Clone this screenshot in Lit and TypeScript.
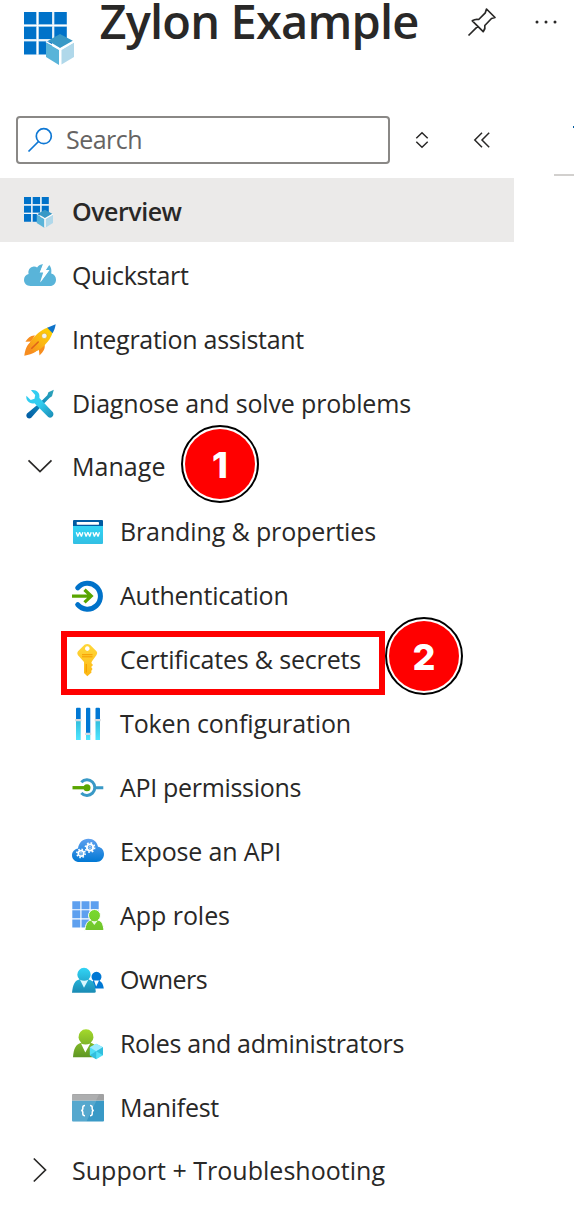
import { LitElement, html, svg, css, TemplateResult } from "lit";
import { customElement, property } from "lit/decorators.js";
import { styleMap } from "lit/directives/style-map.js";

const appGrid = svg`
  <path fill="#0072c9" d="M0 0h12.400v12.400H0zM14.600 0h13.400v12.400H14.600zM30.200 0h12.600v12.400H30.200zM0 14.600h12.400v12.400H0zM14.600 14.600h13.400v12.400H14.600zM30.200 14.600h12.600v12.400H30.200zM0 29.200h12.400v13.400H0zM14.600 29.200h13.400v13.400H14.600z"/>
  <path fill="#b5d7ee" d="M12.400 0h2.200v42.600h-2.200zM28 0h2.200v28H28zM0 12.400h42.800v2.200H0zM0 27h28v2.200H0z"/>
  <path fill="#fff" d="M13 0h1.100v42.600H13zM28.600 0h1.100v28h-1.100zM0 13h42.800v1.100H0zM0 27.600h28v1.100H0z"/>
  <path fill="#3999c6" d="M36 22l12.800 6.800L36 36 24 28.800z"/>
  <path fill="#59b4d9" d="M22 30.500L35 38v15L22 45z"/>
  <path fill="#b0d8ea" d="M50 30.500V45L37.500 52.500V38z"/>
  <path stroke="#fff" stroke-width="1.500" fill="none" d="M22 29.700L36.200 37.500 50 29.700M36.200 37.500V52"/>`;

const icons: Record<string, TemplateResult> = {
  overview: html`<svg viewBox="0 -5.200 55.200 55.200">${appGrid}</svg>`,
  quickstart: html`<svg viewBox="0 0 32 32">
    <path fill="#59b4d9" d="M6.500 28C2.600 28 0 25.200 0 22c0-3.100 2-5.400 4.600-6C3.700 12 6 9.300 9 8.700c1.500-.3 3 0 4.100.8C14.700 7.200 17 6.200 19.200 6.300L16.300 14h4.200L16.500 24.200 25.500 12h-3.600l3.300-5c2 2 2.600 5 2 8.500 3 .7 4.800 3 4.800 6.200 0 3.600-2.500 6.300-6 6.300z"/>
    <path fill="#fff" d="M19 6.200h6l-3.800 6H25L16 24.500l3.200-10h-3.500z"/></svg>`,
  rocket: html`<svg viewBox="0 -2 32 32">
    <defs><linearGradient id="o" x1="1" y1="0" x2="0" y2="1"><stop offset="0" stop-color="#ffd400"/><stop offset=".55" stop-color="#fbb713"/><stop offset="1" stop-color="#f78d1e"/></linearGradient></defs>
    <path fill="#f78d1e" d="M11 11.500C7 11 4 13.500 1.400 17.800L7 17.400zM20.500 20.500c1 4-1 7-5 11L14.800 25z"/>
    <path fill="#f78d1e" d="M7 18C2.500 20.500 1.300 26 .3 31.700 6 30.500 11 29.500 14.500 25z"/>
    <path fill="url(#o)" d="M24 3.500l4.700 4.700C27 14 22.500 21 14 26.500L9 28 5.500 23.500 6 18C11 11 17 6 24 3.500z"/>
    <path fill="#0f73c9" d="M31.700.3L23.200 3.800 28.600 9.300C30.200 6.500 31.200 3.500 31.700.3z"/>
    <circle cx="20.300" cy="11.900" r="2.700" fill="#f2f2f2" stroke="#d9a000" stroke-width=".5"/>
    <path stroke="#e0631a" stroke-width="1.600" stroke-linecap="round" d="M7.800 24.300L14.200 18"/></svg>`,
  tools: html`<svg viewBox="0 -2 32 32">
    <defs><linearGradient id="b" x1="1" y1="0" x2="0" y2="1"><stop stop-color="#32a5b8"/><stop offset=".4" stop-color="#1490bd"/><stop offset="1" stop-color="#0059a3"/></linearGradient>
    <linearGradient id="c" x1="0" y1="0" x2="1" y2="1"><stop offset=".5" stop-color="#32cdf0"/><stop offset="1" stop-color="#198ab3"/></linearGradient></defs>
    <path fill="url(#b)" d="M29.800 1.800l-5.400 2.500-1.100 3L15 15.600 3 25.600c-2 3 1 6 4 4.300L17.500 18l8.200-8.300 2.300-1.500z"/>
    <path fill="url(#c)" d="M7 2.300c5-1 9.300 2.200 8.400 7.700l13.500 14.300c1.800 3.300-1.500 6.700-4.700 4.800L10.500 15.200C5.500 16.300 1.500 12.500 2.400 7.800L6.700 12l3.800-1.200.7-3.700z"/></svg>`,
  www: html`<svg viewBox="0 -1 32 32">
    <defs><linearGradient id="w" x1="0" y1="0" x2="0" y2="1"><stop stop-color="#32d4f5"/><stop offset="1" stop-color="#32bfe3"/></linearGradient></defs>
    <path fill="url(#w)" d="M1 11h30v17q0 1-1 1H2q-1 0-1-1z"/>
    <path fill="#005ba1" d="M2 5h28q1 0 1 1v5H1V6q0-1 1-1z"/><rect x="4.700" y="7" width="22.300" height="2.700" rx=".4" fill="#fff"/>
    <path fill="none" stroke="#fff" stroke-width="1.300" stroke-linejoin="bevel" d="M4.300 17.200l1.500 4.300 1.800-4.300 1.800 4.300 1.500-4.300M12.600 17.200l1.500 4.300 1.800-4.300 1.800 4.300 1.500-4.300M20.900 17.200l1.500 4.300 1.800-4.300 1.800 4.300 1.500-4.300"/></svg>`,
  auth: html`<svg viewBox="0 -1.300 32 32">
    <path fill="none" stroke="#0072c9" stroke-width="5" stroke-linecap="round" d="M5.700 8.600A12.900 12.900 0 1 1 5.700 25.300"/>
    <path fill="none" stroke="#fff" stroke-width="6" d="M0 17h19"/>
    <path fill="none" stroke="#59a500" stroke-width="3.300" d="M0 16.800h18M12.500 10.500l6.700 6.300-6.700 6.300"/></svg>`,
  key: html`<svg viewBox="0 -2 32 32">
    <defs><linearGradient id="k" x1="0" y1="0" x2="0" y2="1"><stop stop-color="#ffd83b"/><stop offset="1" stop-color="#fcb714"/></linearGradient></defs>
    <path fill="url(#k)" fill-rule="evenodd" d="M12.500.7Q15.300-.9 18 .7L24.500 7.300Q26 9 24.500 11L20 17.200 19.300 19 21 21 19.200 23 20.500 25 19.200 27 19.500 28.500 15.300 32.200 12 29V18L5.800 11Q4.600 9 6 7.300zM15.300 2.300a2.300 2.300 0 1 0 .01 0z"/>
    <path stroke="#f59b00" stroke-width="1" d="M10 10.700h10.500M10 12.800h10.500"/><path stroke="#f5a200" stroke-width="1.300" d="M14.300 20v8.500"/></svg>`,
  token: html`<svg viewBox="0 -2 32 32">
    <defs><linearGradient id="t" x1="0" y1="0" x2="0" y2="1"><stop stop-color="#32bedd"/><stop offset="1" stop-color="#50e6ff"/></linearGradient></defs>
    <g fill="#0078d4"><rect x="4" y="-.3" width="4.700" height="13" rx="1"/><rect x="14" y="-.3" width="4.300" height="27" rx="1"/><rect x="23.500" y="-.3" width="4.500" height="13" rx="1"/></g>
    <g fill="url(#t)"><path d="M4 13h4.700v19H4zM23.500 13H28v19h-4.500zM14 27h4.300v5H14z"/></g>
    <path fill="#d5d9de" d="M3.200 11h6.200v2.300H3.200zM22.700 11h6v2.300h-6zM13.200 24.700h6v2.300h-6z"/></svg>`,
  api: html`<svg viewBox="0 -1.800 32 32">
    <path fill="none" stroke="#3999c6" stroke-width="3" d="M9.300 10.500a7.800 7.800 0 1 1 0 10.600M23 15.900h8.300"/>
    <path stroke="#59a500" stroke-width="3.300" d="M.5 15.900H15"/><circle cx="15" cy="15.900" r="3.500" fill="#59a500"/></svg>`,
  cloud: html`<svg viewBox="0 0 32 32">
    <defs><linearGradient id="d" x1="0" y1="0" x2="0" y2="1"><stop stop-color="#5ea0ef"/><stop offset="1" stop-color="#0078d4"/></linearGradient></defs>
    <path fill="url(#d)" d="M7.500 28C3 28 0 25 0 21.200c0-3.500 2.600-6.200 6-6.700C6.800 8.500 11 4.800 16.300 4.800c5.200 0 8.800 3.200 9.700 8 3.800.6 6 3.700 6 7.200 0 4.500-3.300 8-7.700 8z"/>
    <g fill="none" stroke="#fff"><circle cx="9" cy="19.400" r="2.700" stroke-width="1.700"/><circle cx="9" cy="19.400" r="4.100" stroke-width="1.700" stroke-dasharray="1.500 1.720"/><circle cx="9" cy="19.400" r="1" stroke-width=".6"/>
    <circle cx="18" cy="13.500" r="3.100" stroke-width="1.900"/><circle cx="18" cy="13.500" r="4.600" stroke-width="1.700" stroke-dasharray="1.700 1.910"/><circle cx="18" cy="13.500" r="1.100" stroke-width=".6"/></g></svg>`,
  roles: html`<svg viewBox="0 -2 32 32">
    <defs><linearGradient id="r" x1="0" y1="0" x2="0" y2="1"><stop stop-color="#79da30"/><stop offset="1" stop-color="#70c42b"/></linearGradient></defs>
    <path fill="#5ea0ef" d="M.3 1.300h8v8h-8zM9.500 1.300h8v8h-8zM18.700 1.300h8v8h-8zM.3 10.300h8v8h-8zM9.500 10.300h8v8h-8zM18.700 10.300h8v8h-8zM.3 19.500h8v8h-8zM9.500 19.500h8v8h-8z"/>
    <path fill="url(#r)" stroke="#fff" stroke-width="1" d="M12.800 30.500c.8-6 2-9.500 6-10.300a6 6 0 1 1 7.400 0c4 .8 5 4.300 5.800 10.300z"/>
    <path fill="#e9fbe0" d="M19 20.500l3.300 4.500 3.500-4.500q-3.400 1.300-6.800 0z"/></svg>`,
  owners: html`<svg viewBox="0 -2 32 32">
    <defs><linearGradient id="p" x1="0" y1="0" x2="0" y2="1"><stop stop-color="#32d4f5"/><stop offset="1" stop-color="#198ab3"/></linearGradient></defs>
    <path fill="#0078d4" d="M18.500 24.500c.5-4.500 1-6.500 3-7.700a5 5 0 1 1 6 0c2.500 1.200 3.700 3.700 4.300 7.700z"/><path fill="#fff" d="M22 16.500l2.200 6 2.800-6z"/>
    <path fill="url(#p)" d="M0 28.800C1 20.500 2.500 16.500 7.500 15.500a6.700 6.700 0 1 1 9 0C21.500 16.500 23 20 23.800 27.500q0 1.300-1.500 1.300z"/><path fill="#d9f8ff" d="M8 15.700l4 8 4.300-8q-4.300 2-8.300 0z"/></svg>`,
  admins: html`<svg viewBox="0 -1.500 32 32">
    <defs><linearGradient id="g" x1="0" y1="0" x2="0" y2="1"><stop stop-color="#a4d92b"/><stop offset="1" stop-color="#5e9624"/></linearGradient></defs>
    <path fill="url(#g)" d="M1 29.800C1.800 21 3.500 17 9.300 15.200a7.500 7.500 0 1 1 9.400 0C24 17 26 20 27 29.800z"/><path fill="#fff" d="M9 16l4.300 9 5-9q-5 2-9.300 0z"/>
    <path fill="#50dff5" d="M24.200 16.200L31 19.700v8l-6.800 4-6.400-4v-8z"/><path fill="#9cebff" d="M24.200 16.200L31 19.700l-6.800 4-6.400-4z"/><path fill="#32bedd" d="M24.200 23.700l6.800-4v8zM17.800 27.700l6.400-4v8z"/></svg>`,
  manifest: html`<svg viewBox="0 -3.500 32 32">
    <path fill="#3999c6" d="M0 7h32v20q0 1-1 1H1q-1 0-1-1z"/><path fill="#fff" opacity=".15" d="M0 7h24.500L14.500 28H0z"/><path fill="#a0a1a2" d="M1 .5h30q1 0 1 1V7H0V1.500q0-1 1-1z"/><path fill="#fff" opacity=".14" d="M0 1h27l-3 6H0z"/>
    <path fill="none" stroke="#fff" stroke-width="1.500" d="M13 12q-2.200 0-2.200 2v1.500q0 1.500-1.700 1.500 1.700 0 1.700 1.500v1.700q0 2 2.200 2M18 12q2.200 0 2.200 2v1.500q0 1.500 1.700 1.500-1.700 0-1.700 1.500v1.700q0 2-2.200 2"/></svg>`,
  down: html`<svg viewBox="0 0 32 32"><path fill="none" stroke="#292827" stroke-width="1.700" d="M4.500 10.300L16 21.500 27.500 10.300"/></svg>`,
  right: html`<svg viewBox="0 0 32 32"><path fill="none" stroke="#292827" stroke-width="1.700" d="M9.800 4.500L21.500 16 9.800 27.500"/></svg>`,
};

/* A single line of text whose tracking is adjusted so that it spans a set width. */
@customElement("fit-text")
class FitText extends LitElement {
  static styles = css`
    :host { display: inline-block; white-space: nowrap; }
    .line { display: inline-block; }
  `;
  @property() text = "";
  @property({ type: Number }) span = 0;
  @property({ type: Number }) tracking = 0;

  firstUpdated() {
    const line = this.renderRoot.querySelector(".line") as HTMLElement;
    const natural = line.getBoundingClientRect().width;
    this.tracking = (this.span - natural) / this.text.length;
  }
  render() {
    return html`<span class="line" style=${styleMap({ letterSpacing: `${this.tracking}px` })}>${this.text}</span>`;
  }
}

interface Item { icon: string; label: string; span: number; kind?: string; badge?: string; marked?: boolean; }

const items: Item[] = [
  { icon: "overview", label: "Overview", span: 109.5, kind: "selected" },
  { icon: "quickstart", label: "Quickstart", span: 116.5 },
  { icon: "rocket", label: "Integration assistant", span: 232 },
  { icon: "tools", label: "Diagnose and solve problems", span: 339 },
  { icon: "down", label: "Manage", span: 93.5, kind: "group", badge: "1" },
  { icon: "www", label: "Branding & properties", span: 256, kind: "sub" },
  { icon: "auth", label: "Authentication", span: 168.5, kind: "sub" },
  { icon: "key", label: "Certificates & secrets", span: 241, kind: "sub", badge: "2", marked: true },
  { icon: "token", label: "Token configuration", span: 231, kind: "sub" },
  { icon: "api", label: "API permissions", span: 181, kind: "sub" },
  { icon: "cloud", label: "Expose an API", span: 161, kind: "sub" },
  { icon: "roles", label: "App roles", span: 110, kind: "sub" },
  { icon: "owners", label: "Owners", span: 87, kind: "sub" },
  { icon: "admins", label: "Roles and administrators", span: 284, kind: "sub" },
  { icon: "manifest", label: "Manifest", span: 99, kind: "sub" },
  { icon: "right", label: "Support + Troubleshooting", span: 313, kind: "group" },
];

@customElement("app-root")
class AppRoot extends LitElement {
  static styles = css`
    :host { display: block; width: 574px; height: 1210px; overflow: hidden; background: #fff; color: #292827; font-family: "Open Sans", "Noto Sans", sans-serif; font-size: 25px; }
    svg { display: block; overflow: visible; }
    .page { display: grid; grid-template-columns: 514px 1fr; height: 1210px; }
    .side { display: flex; flex-direction: column; min-width: 0; }
    .head { display: flex; height: 116px; padding-left: 24px; box-sizing: border-box; width: 574px; }
    .logo { width: 50px; height: 53px; margin-top: 12px; flex: none; }
    .title { margin-left: 25.5px; width: 368.5px; font-size: 47px; line-height: 42px; font-weight: 600; flex: none; }
    .pin { width: 28px; height: 28px; margin-top: 8px; flex: none; }
    .more { width: 24px; height: 4px; margin: 20px 0 0 38px; flex: none; }
    .tools { display: flex; align-items: center; height: 48px; padding-left: 16px; margin-bottom: 14px; }
    .search { display: flex; align-items: center; box-sizing: border-box; width: 374px; height: 48px; border: 2px solid #8a8886; border-radius: 4px; padding-left: 10px; color: #666463; }
    .search svg { width: 24px; height: 24px; margin-right: 14px; }
    .search fit-text { padding-bottom: 2px; }
    .sort { width: 12px; height: 16px; margin-left: 26px; }
    .collapse { width: 16px; height: 16px; margin-left: 46px; }
    .row { position: relative; display: flex; align-items: center; height: 64px; padding-left: 24px; gap: 16px; }
    .row fit-text { line-height: 34px; padding-top: 1px; }
    .row.group fit-text { padding: 0 0 1px; }
    .sub { padding-left: 72px; }
    .selected { background: #ebeae9; font-weight: 600; }
    .icon { width: 32px; height: 32px; flex: none; }
    .badge { position: absolute; left: 181px; top: -9px; width: 78px; height: 78px; box-sizing: border-box; border: 2px solid #000; border-radius: 50%; padding: 2px; background: #fff; }
    .sub .badge { left: 385px; top: -9px; }
    .disc { display: flex; align-items: center; justify-content: center; height: 70px; border-radius: 50%; background: #f00; color: #fff; font: 800 36px/44px Inter, sans-serif; box-sizing: border-box; padding-top: 2px; }
    .mark { position: absolute; left: 61px; top: 5px; width: 324px; height: 64px; box-sizing: border-box; border: 6px solid #f00; }
    .rest { display: flex; flex-direction: column; padding-top: 126px; align-items: flex-end; }
    .tab { width: 1px; height: 2px; background: #005a9e; }
    .rule { width: 20px; height: 2px; margin-top: 46px; background: #d2d0ce; }
  `;

  private row(i: Item) {
    return html`<div class="row ${i.kind ?? ""}">
      <div class="icon">${icons[i.icon]}</div>
      <fit-text .text=${i.label} .span=${i.span}></fit-text>
      ${i.marked ? html`<div class="mark"></div>` : ""}
      ${i.badge ? html`<div class="badge"><div class="disc">${i.badge}</div></div>` : ""}
    </div>`;
  }

  render() {
    return html`<div class="page">
      <div class="side">
        <div class="head">
          <svg class="logo" viewBox="0 0 50 53">${appGrid}</svg>
          <div class="title"><fit-text .text=${"Zylon Example"} .span=${319}></fit-text></div>
          <svg class="pin" viewBox="0 0 28 28"><path fill="none" stroke="#292827" stroke-width="1.700" stroke-linejoin="round" d="M.5 27.500L9.700 18.300M18.500 1L27 9.500 23.500 10.500 16.800 17.500C17.500 20 16.500 22 15.200 23.700L4.300 12.800C6.500 11.300 8.500 11 10.700 11.500L17.300 4.800z"/></svg>
          <svg class="more" viewBox="0 0 24 4"><g fill="#292827"><circle cx="3" cy="2" r="1.500"/><circle cx="12" cy="2" r="1.500"/><circle cx="21" cy="2" r="1.500"/></g></svg>
        </div>
        <div class="tools">
          <div class="search">
            <svg viewBox="0 0 24 24"><g fill="none" stroke="#0f78d4" stroke-width="1.700"><circle cx="15.800" cy="8.200" r="7.500"/><path d="M.5 23.500L10.500 13.500"/></g></svg>
            <fit-text .text=${"Search"} .span=${76}></fit-text>
          </div>
          <svg class="sort" viewBox="0 0 12 16"><path fill="none" stroke="#292827" stroke-width="1.500" d="M.3 6.300L6 .8 11.700 6.300M.3 9.700L6 15.200 11.700 9.700"/></svg>
          <svg class="collapse" viewBox="0 0 16 16"><path fill="none" stroke="#292827" stroke-width="1.500" d="M8 .8L.8 8 8 15.200M15.200.8L8 8 15.200 15.200"/></svg>
        </div>
        ${items.map((i) => this.row(i))}
      </div>
      <div class="rest"><div class="tab"></div><div class="rule"></div></div>
    </div>`;
  }
}
